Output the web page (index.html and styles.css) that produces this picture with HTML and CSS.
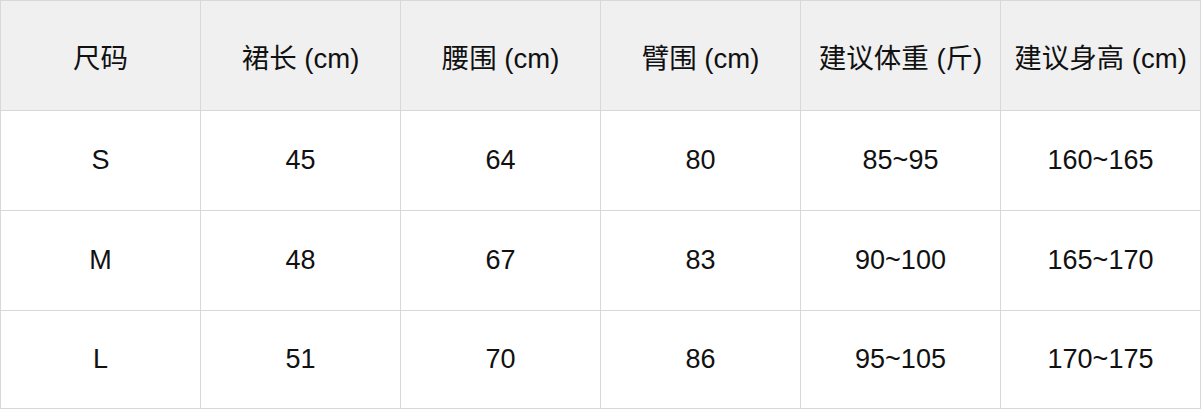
FILE: index.html
```html
<!DOCTYPE html>
<html lang="zh">
<head>
<meta charset="utf-8">
<title>尺码表</title>
<link rel="stylesheet" href="styles.css">
</head>
<body>
<div class="size-table">
  <div class="cell head">尺码</div>
  <div class="cell head">裙长 (cm)</div>
  <div class="cell head">腰围 (cm)</div>
  <div class="cell head">臂围 (cm)</div>
  <div class="cell head">建议体重 (斤)</div>
  <div class="cell head">建议身高 (cm)</div>

  <div class="cell">S</div>
  <div class="cell">45</div>
  <div class="cell">64</div>
  <div class="cell">80</div>
  <div class="cell">85~95</div>
  <div class="cell">160~165</div>

  <div class="cell">M</div>
  <div class="cell">48</div>
  <div class="cell">67</div>
  <div class="cell">83</div>
  <div class="cell">90~100</div>
  <div class="cell">165~170</div>

  <div class="cell">L</div>
  <div class="cell">51</div>
  <div class="cell">70</div>
  <div class="cell">86</div>
  <div class="cell">95~105</div>
  <div class="cell">170~175</div>
</div>
</body>
</html>
```

FILE: styles.css
```css
html, body {
  margin: 0;
  padding: 0;
  background: #ffffff;
}

.size-table {
  display: grid;
  width: 1201px;
  box-sizing: border-box;
  grid-template-columns: repeat(6, 199px);
  grid-template-rows: 109px 99px 99px 97px;
  gap: 1px;
  padding: 1px;
  background: #d8d8d8;
  font-family: "Liberation Sans", "Noto Sans CJK SC", sans-serif;
  font-size: 27px;
  color: #111111;
}

.cell {
  display: flex;
  align-items: center;
  justify-content: center;
  background: #ffffff;
  white-space: nowrap;
}

.cell.head {
  background: #f0f0f0;
  font-size: 27.5px;
}
```
